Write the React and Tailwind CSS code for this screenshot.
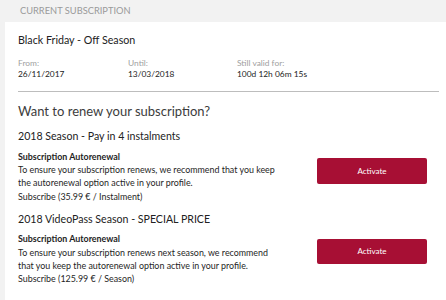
export default function App() {
  const f = { fontFamily: 'Lato, "Noto Sans", sans-serif' };
  return (
    <div className="w-[446px] h-[300px] overflow-hidden bg-[#f2f2f2]" style={f}>
      <div className="pl-[20px] pt-[4px] h-[22px] text-[9.3px] leading-[14px] text-[#9a9a9a]">CURRENT SUBSCRIPTION</div>
      <div className="ml-[5px] bg-white pl-[13px] pr-[7px] pt-[11px] h-[300px]">
        <div className="text-[10.7px] leading-[14px] text-[#222]">Black Friday - Off Season</div>
        <div className="flex mt-[10.5px] text-[8.4px] leading-[11px]">
          <div className="w-[110px]"><div className="text-[#a0a0a0]">From:</div><div className="text-[#222]">26/11/2017</div></div>
          <div className="w-[109px]"><div className="text-[#a0a0a0]">Until:</div><div className="text-[#222]">13/03/2018</div></div>
          <div><div className="text-[#a0a0a0]">Still valid for:</div><div className="text-[#222]">100d 12h 06m 15s</div></div>
        </div>
        <div className="mt-[11px] border-t border-[#bdbdbd]"></div>
        <div className="mt-[10px] text-[13px] leading-[18px] text-[#3c3c3c]">Want to renew your subscription?</div>
        <div className="mt-[9px] text-[10.6px] leading-[14px] text-[#222]">2018 Season - Pay in 4 instalments</div>
        <div className="flex mt-[7px]">
          <div className="w-[262px] mr-[37px] text-[8.9px] leading-[13.4px] text-[#1e1e1e]">
            <div className="font-bold">Subscription Autorenewal</div>
            <div>To ensure your subscription renews, we recommend that you keep the autorenewal option active in your profile.</div>
            <div>Subscribe (35.99 € / Instalment)</div>
          </div>
          <div className="pt-[6px]">
            <button className="w-[110px] h-[26px] rounded-[2px] bg-[#a70f34] text-white text-[8px]">Activate</button>
          </div>
        </div>
        <div className="mt-[9px] text-[10.6px] leading-[14px] text-[#222]">2018 VideoPass Season - SPECIAL PRICE</div>
        <div className="flex mt-[6px]">
          <div className="w-[262px] mr-[37px] text-[8.9px] leading-[13.4px] text-[#1e1e1e]">
            <div className="font-bold">Subscription Autorenewal</div>
            <div>To ensure your subscription renews next season, we recommend that you keep the autorenewal option active in your profile.</div>
            <div>Subscribe (125.99 € / Season)</div>
          </div>
          <div className="pt-[4px]">
            <button className="w-[110px] h-[25px] rounded-[2px] bg-[#a70f34] text-white text-[8px]">Activate</button>
          </div>
        </div>
      </div>
    </div>
  );
}
